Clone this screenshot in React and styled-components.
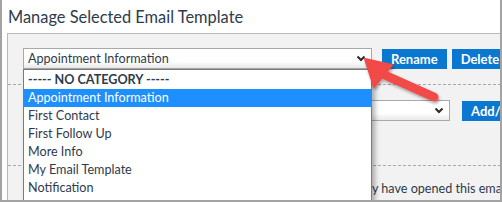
import styled, { createGlobalStyle } from 'styled-components';

const GlobalStyle = createGlobalStyle`
  html, body {
    margin: 0;
    padding: 0;
    background: #ffffff;
  }
  body {
    font-family: Lato, "Open Sans", sans-serif;
    color: #2e3b4c;
  }
`;

const options = [
  'Appointment Information',
  'First Contact',
  'First Follow Up',
  'More Info',
  'My Email Template',
  'Notification',
  'Reminder',
];

const Frame = styled.div`
  position: relative;
  box-sizing: border-box;
  width: 502px;
  height: 202px;
  border: 2px solid #a3a3a3;
  border-top: none;
  overflow: hidden;
  background: #ffffff;
`;

const Title = styled.h2`
  margin: 0;
  padding: 7px 0 0 6px;
  height: 33px;
  box-sizing: border-box;
  font-size: 16.4px;
  font-weight: 400;
  color: #2e3b4c;
  white-space: nowrap;
`;

const Panel = styled.div`
  margin-left: 5px;
  width: 520px;
  height: 200px;
  box-sizing: border-box;
  border: 1px solid #b8b8b8;
  background: #f2f2f2;
  padding-top: 14px;
`;

const Row = styled.div`
  display: flex;
  align-items: stretch;
  padding-left: 15px;
  gap: ${({ $gap }) => $gap}px;

  & > * {
    flex-shrink: 0;
  }
`;

const ButtonGroup = styled.div`
  display: flex;
  gap: 5px;
`;

const SelectWrap = styled.div`
  position: relative;
  width: ${({ $w }) => $w}px;
`;

const SelectBox = styled.div`
  box-sizing: border-box;
  height: 21px;
  display: flex;
  align-items: center;
  justify-content: space-between;
  padding: 0 5px 0 4px;
  border: 1px solid #a9a9a9;
  background: linear-gradient(to bottom, #ffffff 0%, #ffffff 65%, #e9e9e9 100%);
  font-size: 12.6px;
  color: #2e3b4c;
  white-space: nowrap;
`;

const Chevron = () => (
  <svg width="10" height="7" viewBox="0 0 10 7">
    <polyline points="1.5,1.5 5,5 8.5,1.5" fill="none" stroke="#2b2b2b" strokeWidth="2" />
  </svg>
);

const Button = styled.button`
  height: 20px;
  margin-top: 1px;
  padding: 0 9px;
  border: none;
  background: #0a78d0;
  color: #ffffff;
  font-family: Lato, "Open Sans", sans-serif;
  font-size: 13px;
  font-weight: 700;
  cursor: pointer;
  white-space: nowrap;
`;

const Divider = styled.div`
  border-top: 1px dashed #a8a8a8;
  margin: ${({ $top }) => $top}px 0 ${({ $bottom }) => $bottom}px;
`;

const Note = styled.div`
  padding-left: 22px;
  font-size: 12.6px;
  color: #2e3b4c;
  white-space: nowrap;
`;

const List = styled.ul`
  position: absolute;
  top: 100%;
  left: 0;
  z-index: 5;
  box-sizing: border-box;
  width: 100%;
  margin: 0;
  padding: 1px 0 0;
  list-style: none;
  background: #ffffff;
  border: 1px solid #7b7b7b;
  box-shadow: 3px 3px 5px rgba(0, 0, 0, 0.3);
`;

const Item = styled.li`
  height: 18px;
  line-height: 18px;
  padding-left: 4px;
  font-size: 12.6px;
  font-weight: ${({ $bold }) => ($bold ? 700 : 400)};
  background: ${({ $active }) => ($active ? '#1e8ffe' : 'transparent')};
  color: ${({ $active }) => ($active ? '#ffffff' : '#2e3b4c')};
  white-space: nowrap;
`;

const Arrow = () => (
  <svg
    width="502"
    height="202"
    viewBox="0 0 502 202"
    style={{ position: 'absolute', left: 0, top: 0, zIndex: 10, pointerEvents: 'none' }}
  >
    <defs>
      <filter id="arrowShadow" x="-20%" y="-20%" width="140%" height="140%">
        <feDropShadow dx="1" dy="2" stdDeviation="1.5" floodColor="#000" floodOpacity="0.35" />
      </filter>
    </defs>
    <g filter="url(#arrowShadow)" fill="#f24848" stroke="#f24848">
      <line x1="432" y1="97" x2="376" y2="72" strokeWidth="9" strokeLinecap="round" />
      <polygon points="363,59 390,65 372,87" strokeWidth="2" strokeLinejoin="round" />
    </g>
  </svg>
);

export default function App() {
  return (
    <>
      <GlobalStyle />
      <Frame>
        <Title>Manage Selected Email Template</Title>
        <Panel>
          <Row $gap={10}>
            <SelectWrap $w={349}>
              <SelectBox>
                Appointment Information
                <Chevron />
              </SelectBox>
              <List>
                <Item $bold>----- NO CATEGORY -----</Item>
                {options.map((o, i) => (
                  <Item key={o} $active={i === 0}>
                    {o}
                  </Item>
                ))}
              </List>
            </SelectWrap>
            <ButtonGroup>
              <Button>Rename</Button>
              <Button>Delete</Button>
            </ButtonGroup>
          </Row>
          <Divider $top={15} $bottom={15} />
          <Row $gap={12}>
            <SelectWrap $w={427}>
              <SelectBox>
                First Contact
                <Chevron />
              </SelectBox>
            </SelectWrap>
            <Button>Add/Edit</Button>
          </Row>
          <Divider $top={44} $bottom={15} />
          <Note>Send me a notification by email when all the recipients say they have opened this email</Note>
        </Panel>
        <Arrow />
      </Frame>
    </>
  );
}
